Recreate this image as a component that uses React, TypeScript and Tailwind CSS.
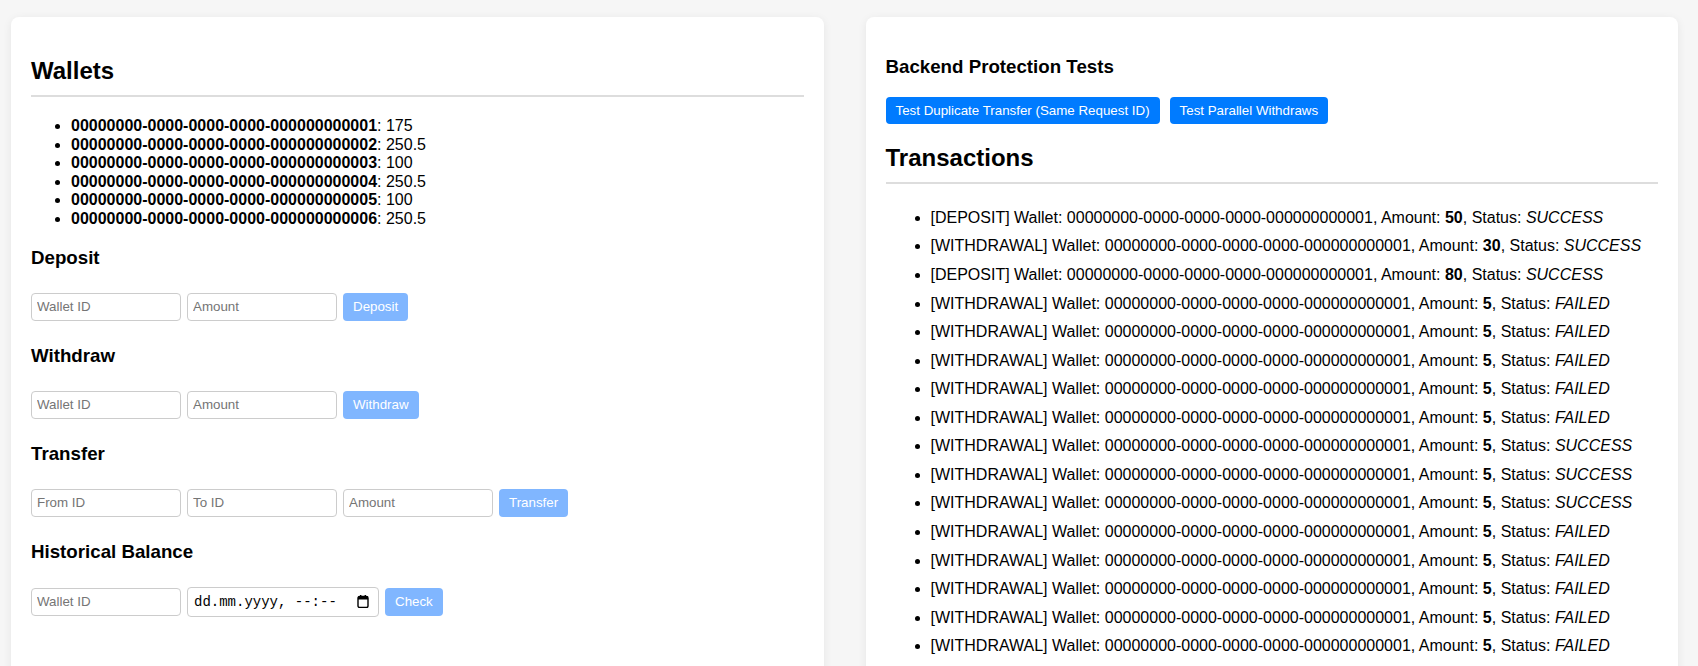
import React from "react";

const wallets: [string, string][] = [
  ["00000000-0000-0000-0000-000000000001", "175"],
  ["00000000-0000-0000-0000-000000000002", "250.5"],
  ["00000000-0000-0000-0000-000000000003", "100"],
  ["00000000-0000-0000-0000-000000000004", "250.5"],
  ["00000000-0000-0000-0000-000000000005", "100"],
  ["00000000-0000-0000-0000-000000000006", "250.5"],
];

type Tx = { type: string; amount: string; status: string };
const txs: Tx[] = [
  { type: "DEPOSIT", amount: "50", status: "SUCCESS" },
  { type: "WITHDRAWAL", amount: "30", status: "SUCCESS" },
  { type: "DEPOSIT", amount: "80", status: "SUCCESS" },
  { type: "WITHDRAWAL", amount: "5", status: "FAILED" },
  { type: "WITHDRAWAL", amount: "5", status: "FAILED" },
  { type: "WITHDRAWAL", amount: "5", status: "FAILED" },
  { type: "WITHDRAWAL", amount: "5", status: "FAILED" },
  { type: "WITHDRAWAL", amount: "5", status: "FAILED" },
  { type: "WITHDRAWAL", amount: "5", status: "SUCCESS" },
  { type: "WITHDRAWAL", amount: "5", status: "SUCCESS" },
  { type: "WITHDRAWAL", amount: "5", status: "SUCCESS" },
  { type: "WITHDRAWAL", amount: "5", status: "FAILED" },
  { type: "WITHDRAWAL", amount: "5", status: "FAILED" },
  { type: "WITHDRAWAL", amount: "5", status: "FAILED" },
  { type: "WITHDRAWAL", amount: "5", status: "FAILED" },
  { type: "WITHDRAWAL", amount: "5", status: "FAILED" },
];

function Input({ placeholder }: { placeholder: string }) {
  return (
    <input
      placeholder={placeholder}
      className="box-border h-[27.5px] w-[150px] rounded-[4px] border border-[#cccccc] bg-white px-[5px] text-[13.33px] leading-[15px] text-black outline-none placeholder:text-[#757575] font-['Liberation_Sans',Arial,sans-serif]"
    />
  );
}

function LightButton({ label }: { label: string }) {
  return (
    <button className="box-border h-[27.5px] rounded-[4px] bg-[#80b6ff] px-[10px] text-[13.33px] leading-[15px] text-white font-['Liberation_Sans',Arial,sans-serif]">
      {label}
    </button>
  );
}

function Section({ title, children }: { title: string; children: React.ReactNode }) {
  return (
    <>
      <h3 className="mt-[24.5px] text-[18.72px] font-bold leading-[21.5px]">{title}</h3>
      <div className="mt-[24.5px] flex items-center gap-[6px]">{children}</div>
    </>
  );
}

function CalendarIcon() {
  return (
    <svg width="12" height="13" viewBox="0 0 12 13" className="shrink-0">
      <rect x="1" y="1.5" width="10" height="11" rx="1.5" fill="none" stroke="#000" strokeWidth="1.4" />
      <rect x="1" y="1.5" width="10" height="3" fill="#000" />
      <rect x="3" y="0" width="1.4" height="2.5" fill="#000" />
      <rect x="7.6" y="0" width="1.4" height="2.5" fill="#000" />
    </svg>
  );
}

export default function App() {
  return (
    <div className="h-[666px] overflow-hidden bg-[#f6f6f6] text-black font-['Liberation_Sans',Arial,sans-serif]">
      <div className="flex items-stretch gap-[42px] pl-[11px] pr-[20px] pt-[17px] pb-[20px]">
        {/* Left card */}
        <div className="flex-1 rounded-[8px] bg-white p-[20px] shadow-[0_2px_10px_rgba(0,0,0,0.07)]">
          <h2 className="mt-[20px] border-b-2 border-[#dddddd] pb-[10px] text-[24px] font-bold leading-[27.6px]">
            Wallets
          </h2>
          <ul className="mt-[20.5px] list-disc pl-[40px] text-[16px] leading-[18.6px]">
            {wallets.map(([id, bal]) => (
              <li key={id}>
                <strong className="font-bold">{id}</strong>: {bal}
              </li>
            ))}
          </ul>
          <div className="mt-[-6px]" />
          <Section title="Deposit">
            <Input placeholder="Wallet ID" />
            <Input placeholder="Amount" />
            <LightButton label="Deposit" />
          </Section>
          <Section title="Withdraw">
            <Input placeholder="Wallet ID" />
            <Input placeholder="Amount" />
            <LightButton label="Withdraw" />
          </Section>
          <Section title="Transfer">
            <Input placeholder="From ID" />
            <Input placeholder="To ID" />
            <Input placeholder="Amount" />
            <LightButton label="Transfer" />
          </Section>
          <Section title="Historical Balance">
            <Input placeholder="Wallet ID" />
            <div className="box-border flex h-[29.5px] w-[192px] items-center justify-between rounded-[4px] border border-[#cccccc] bg-white pl-[6px] pr-[9px]">
              <span className="text-[14px] leading-[16px] text-black font-['Liberation_Mono',monospace]">
                dd.mm.yyyy, --:--
              </span>
              <CalendarIcon />
            </div>
            <LightButton label="Check" />
          </Section>
        </div>

        {/* Right card */}
        <div className="flex-1 rounded-[8px] bg-white p-[20px] shadow-[0_2px_10px_rgba(0,0,0,0.07)]">
          <h3 className="mt-[18.7px] text-[18.72px] font-bold leading-[21.5px]">Backend Protection Tests</h3>
          <div className="mt-[20px] flex gap-[10px]">
            <button className="h-[27px] rounded-[4px] bg-[#007bff] px-[10px] text-[13.33px] leading-[15px] text-white">
              Test Duplicate Transfer (Same Request ID)
            </button>
            <button className="h-[27px] rounded-[4px] bg-[#007bff] px-[10px] text-[13.33px] leading-[15px] text-white">
              Test Parallel Withdraws
            </button>
          </div>
          <h2 className="mt-[20px] border-b-2 border-[#dddddd] pb-[10px] text-[24px] font-bold leading-[27.6px]">
            Transactions
          </h2>
          <ul className="mt-[20px] mb-[16px] list-disc pl-[45px] text-[16px] leading-[18.4px]">
            {txs.map((t, i) => (
              <li key={i} className="py-[5.08px]">
                [{t.type}] Wallet: 00000000-0000-0000-0000-000000000001, Amount:{" "}
                <strong className="font-bold">{t.amount}</strong>, Status: <em className="italic">{t.status}</em>
              </li>
            ))}
          </ul>
        </div>
      </div>
    </div>
  );
}
